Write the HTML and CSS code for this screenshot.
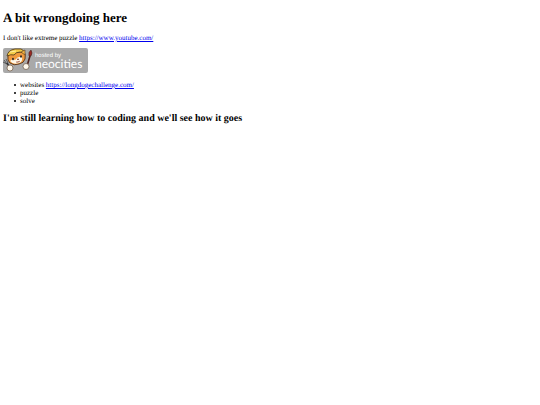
FILE: index.html
```
<!DOCTYPE html>
<html lang="en">
<head>
  <meta charset="UTF-8">
  <title>A bit wrongdoing here</title>
  <link rel="stylesheet" href="styles.css">
</head>
<body>
  <h1>A bit wrongdoing here</h1>
  <p>I don't like extreme puzzle <a href="https://www.youtube.com/">https://www.youtube.com/</a></p>

  <a class="badge" href="https://neocities.org/" aria-label="hosted by neocities">
    <svg width="85" height="25" viewBox="0 0 85 25">
      <rect width="85" height="25" rx="2" fill="#a9a9a9"/>
      <!-- tools -->
      <path d="M1 12l3 4M3 11l2 4M0 14l4 2" stroke="#444" stroke-width=".8"/>
      <path d="M4 15l3 5" stroke="#333" stroke-width="1.6"/>
      <path d="M27 8l-3 10" stroke="#54211a" stroke-width="1.6" stroke-linecap="round"/>
      <path d="M26 8q-1-4 2-6q2 3 0 6z" fill="#9b2922" stroke="#3b2622" stroke-width=".5"/>
      <!-- cat head -->
      <path d="M5 7q-1 6 2 8q4 3 9 1q5-1 6-5q1-4-1-8l-4 1-8 1z" fill="#f09a3e" stroke="#533117" stroke-width=".9"/>
      <path d="M7 13q3-3 5-1q3-4 7-3q1 5-3 6q-6 2-9-2z" fill="#fff7e6"/>
      <path d="M4 8q1-6 8-7l6 0q3 1 3 4l-4-1q-4 0-6 3q-3-1-7 1z" fill="#f4cb48" stroke="#5b431d" stroke-width=".9"/>
      <path d="M18 4l4-2 0 5z" fill="#f3b343" stroke="#594020" stroke-width=".6"/>
      <path d="M7 4l6-1" stroke="#fff0a0" stroke-width="1"/>
      <ellipse cx="10" cy="11" rx=".9" ry="1.3" fill="#292421"/>
      <ellipse cx="18" cy="8.5" rx=".9" ry="1.3" fill="#292421"/>
      <path d="M14 11l2 0-1 1zM13 14q2 1 4-1" fill="#ce5b43" stroke="#643321" stroke-width=".5"/>
      <!-- paws -->
      <circle cx="7" cy="20" r="3" fill="#fff9ec" stroke="#6b5542" stroke-width=".7"/>
      <circle cx="23" cy="18.5" r="3" fill="#fff9ec" stroke="#6b5542" stroke-width=".7"/>
      <text class="badge-small" x="32" y="9">hosted by</text>
      <text class="badge-name" x="32" y="20">neocities</text>
    </svg>
  </a>

  <ul>
    <li>websites <a href="https://longdogechallenge.com/">https://longdogechallenge.com/</a></li>
    <li>puzzle</li>
    <li>solve</li>
  </ul>

  <h2>I'm still learning how to coding and we'll see how it goes</h2>
</body>
</html>
```

FILE: styles.css
```
body {
  margin: 10px 3px;
  font-family: "Liberation Serif", "Times New Roman", serif;
  font-size: 7px;
  line-height: 8px;
  text-rendering: geometricPrecision;
  color: #000;
  background-color: #fff;
}
h1 {
  margin: 0 0 8px;
  font-size: 13px;
  line-height: 16px;
}
p {
  margin: 0 0 6px;
}
a {
  color: #0000ee;
}
.badge {
  display: block;
  width: fit-content;
}
.badge svg {
  display: block;
}
.badge-small,
.badge-name {
  fill: #fff;
}
.badge-small {
  font-family: "Liberation Sans", sans-serif;
  font-size: 6px;
}
.badge-name {
  font-family: Lato, sans-serif;
  font-size: 12px;
}
ul {
  margin: 8px 0;
  padding-left: 11px;
  list-style: none;
}
li {
  display: flex;
  align-items: center;
  white-space: pre;
}
li::before {
  content: "";
  width: 2px;
  height: 2px;
  margin-right: 4px;
  border-radius: 50%;
  background-color: #000;
}
h2 {
  margin: 0;
  font-size: 10px;
  line-height: 12px;
}
```
